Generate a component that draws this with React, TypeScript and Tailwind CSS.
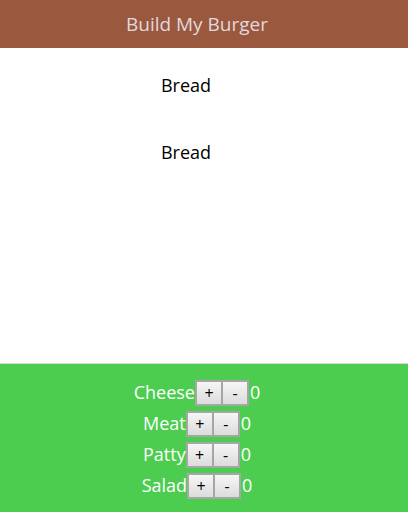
import React from 'react'

const ingredients = ['Cheese', 'Meat', 'Patty', 'Salad']

function Control({ label }: { label: string }) {
  return (
    <div className="flex items-center justify-center h-[31px] text-white text-[18px]">
      <span>{label}</span>
      <button className="box-border w-[28px] h-[26px] border-2 border-[#a6a6a6] bg-gradient-to-b from-[#f6f6f6] to-[#dcdcdc] text-black text-[16px] leading-none">
        +
      </button>
      <button className="box-border w-[26px] h-[26px] border-2 border-l-0 border-[#a6a6a6] bg-gradient-to-b from-[#f6f6f6] to-[#dcdcdc] text-black text-[16px] leading-none">
        -
      </button>
      <span className="ml-[1px]">0</span>
    </div>
  )
}

export default function App() {
  return (
    <div className="w-[408px] h-[526px] bg-white" style={{ fontFamily: '"Open Sans", "Noto Sans", sans-serif' }}>
      <header className="h-[48px] bg-[#9a583e] flex items-center justify-center pr-[14px] text-[#e2d8dc] text-[19px]">
        Build My Burger
      </header>
      <div className="h-[315px] flex flex-col items-center pr-[36px]">
        <div className="mt-[24px] text-[18px] text-black">Bread</div>
        <div className="mt-[40px] text-[18px] text-black">Bread</div>
      </div>
      <div className="h-[149px] bg-[#4ccd4f] border-t border-[#d8d8d8] pt-[13px] pr-[14px]">
        {ingredients.map((name) => (
          <Control key={name} label={name} />
        ))}
      </div>
    </div>
  )
}
